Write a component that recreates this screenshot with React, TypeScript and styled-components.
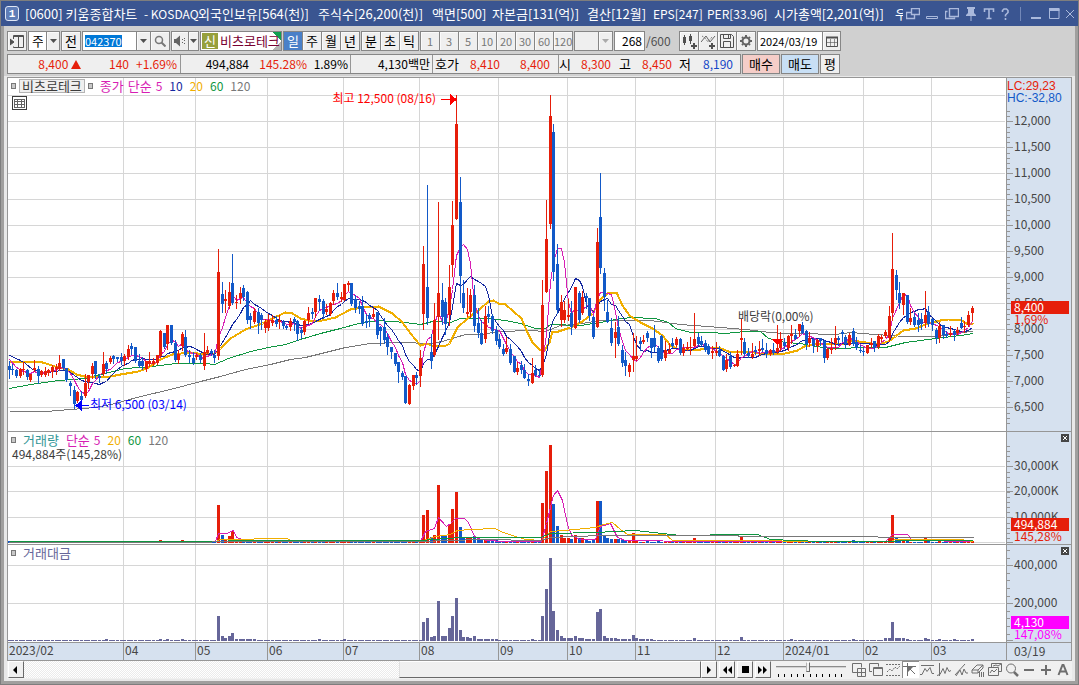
import React from "react";
import styled, { createGlobalStyle } from "styled-components";

const UI_FONT = `"Noto Sans CJK KR", sans-serif`;

const C = {
  up: "#e61e0a",
  down: "#1259c8",
  ma5: "#d71eb4",
  ma10: "#1428a0",
  ma20: "#f0ae00",
  ma60: "#0f9641",
  ma120: "#787878",
  value: "#666699",
  grid: "#d6d6d6",
  line: "#969696",
  axis: "#d6e1ef",
  axisText: "#464646",
  frame: "#868686",
  magenta: "#ff00ff",
};

const GlobalStyle = createGlobalStyle`
  * { box-sizing: border-box; }
  body { margin: 0; background: #a0a0a0; font: 13px/16px ${UI_FONT}; color: #000; }
  button, input, select { font: inherit; color: inherit; margin: 0; padding: 0; border: 0; border-radius: 0; background: none; }
`;

/* ---------- window ---------- */

const Window = styled.div`
  display: flex;
  flex-direction: column;
  height: 100vh;
  min-height: 480px;
  border: 1px solid #7e7e7e;
  background: #a09f9e;
  overflow: hidden;
`;

const TitleBar = styled.header`
  display: flex;
  align-items: center;
  flex: none;
  height: 25px;
  padding-left: 4px;
  background: #3a5591;
  color: #fff;
`;

const WindowBadge = styled.span`
  display: grid;
  place-items: center;
  flex: none;
  width: 14px;
  height: 15px;
  border: 1px solid #dfe6f5;
  border-radius: 3px;
  background: #5f7db8;
  font: bold 11px/12px "Liberation Mono", monospace;
`;

const TitleText = styled.h1`
  display: grid;
  grid-template-columns: 119px 54px 120px 114px 60px 95px 66px 54px 67px 121px 8px;
  align-items: center;
  flex: 1;
  min-width: 0;
  margin: 0 0 0 6px;
  font: inherit;
  line-height: 20px;
  white-space: pre;
  overflow: hidden;
`;

const TitlePart = styled.span<{ $latin?: boolean }>`
  font-size: ${(p) => (p.$latin ? 12 : 13)}px;
`;

const TitleTools = styled.div`
  display: flex;
  flex: none;
  width: 175px;
`;

const TitleButton = styled.button<{ $w: number }>`
  display: grid;
  place-items: center;
  width: ${(p) => p.$w}px;
  height: 20px;
  color: #aab9dc;
`;

const Body = styled.main`
  display: flex;
  flex-direction: column;
  flex: 1;
  min-height: 0;
  margin: 0 3px 3px;
  background: #e8e8e8;
`;

/* ---------- toolbars ---------- */

const Toolbars = styled.div`
  display: flex;
  flex-direction: column;
  flex: none;
  gap: 3px;
  padding: 5px 3px 2px;
  background: #d0d0d0;
`;

const ToolRow = styled.div`
  display: flex;
  gap: 1px;
  height: 20px;
  white-space: nowrap;
`;

const Group = styled.div<{ $w: number; $bg?: string }>`
  display: flex;
  flex: none;
  width: ${(p) => p.$w}px;
  border: 1px solid ${C.frame};
  background: ${(p) => p.$bg ?? "#efefef"};
`;

const Segment = styled.button<{ $active?: boolean; $muted?: boolean; $w?: number }>`
  display: grid;
  place-items: center;
  flex: ${(p) => (p.$w ? `0 0 ${p.$w}px` : "1 1 0")};
  min-width: 0;
  font-size: ${(p) => (p.$muted ? 11 : 13)}px;
  background: ${(p) => (p.$active ? "#4a80c8" : "#efefef")};
  color: ${(p) => (p.$active ? "#fff" : p.$muted ? "#787878" : "#000")};
  box-shadow: ${(p) => (p.$active ? "none" : "inset 1px 1px 0 #fafafa")};
  & + &,
  input + &,
  select + & {
    border-left: 1px solid ${C.frame};
  }
`;

const Picker = styled.select`
  flex: 1;
  min-width: 0;
  padding: 0 3px;
  appearance: none;
  background: #fff;
`;

const EmptyPicker = styled(Picker)`
  background: #efefef;
`;

const CodeInput = styled.input`
  flex: 1;
  min-width: 0;
  padding-left: 2px;
  color: #fff;
  font-size: 11px;
  background: linear-gradient(#0078d7, #0078d7) 2px 3px / 37px 12px no-repeat #fff;
`;

const TextInput = styled.input<{ $size: number; $align?: string }>`
  flex: 1;
  min-width: 0;
  padding: 0 2px;
  font-size: ${(p) => p.$size}px;
  text-align: ${(p) => p.$align ?? "left"};
  background: #fff;
`;

const StockName = styled.div`
  display: flex;
  flex: 1;
  align-items: center;
  gap: 2px;
  padding: 1px;
  color: #780032;
  background:
    linear-gradient(225deg, #0fa050 6px, transparent 6px),
    linear-gradient(315deg, #b4b4b4 6px, transparent 6px),
    #fff;
`;

const CreditBadge = styled.span`
  flex: none;
  width: 16px;
  height: 16px;
  background: #96a03c;
  color: #fff;
  line-height: 15px;
  text-align: center;
`;

const Total = styled.span`
  flex: none;
  width: 32px;
  color: #505050;
  font-size: 12px;
  line-height: 20px;
`;

const Quote = styled.div`
  display: flex;
  flex: none;
  width: 734px;
  border: 1px solid ${C.frame};
  background: #efefef;
`;

const QuoteCell = styled.div<{ $cols: string }>`
  display: grid;
  grid-template-columns: ${(p) => p.$cols};
  text-align: right;
  line-height: 18px;
  & + & {
    border-left: 1px solid ${C.line};
  }
`;

const QuoteLabel = styled.span`
  font-size: 13px;
`;

const Num = styled.span<{ $tone?: "up" | "down" }>`
  font-size: 12px;
  color: ${(p) => (p.$tone === "up" ? C.up : p.$tone === "down" ? "#1446c8" : "#000")};
`;

const OrderButton = styled.button<{ $w: number; $bg: string }>`
  flex: none;
  width: ${(p) => p.$w}px;
  border: 1px solid ${C.frame};
  background: ${(p) => p.$bg};
`;

/* ---------- chart ---------- */

const ChartFrame = styled.section`
  display: flex;
  flex: 1;
  min-height: 0;
  padding: 1px 3px 0;
`;

const ChartGrid = styled.div`
  display: grid;
  grid-template-columns: minmax(0, 1fr) 65px;
  grid-template-rows: minmax(0, 353fr) minmax(0, 113fr) minmax(0, 98fr) 19px;
  flex: 1;
  border: 1px solid ${C.line};
  border-bottom: 0;
`;

const Plot = styled.div<{ $first?: boolean }>`
  position: relative;
  border-top: ${(p) => (p.$first ? "0" : `1px solid ${C.line}`)};
  background: #fff;
  overflow: hidden;
`;

const Scale = styled(Plot)`
  border-left: 1px solid ${C.line};
  background: ${C.axis};
`;

const Canvas = styled.svg`
  position: absolute;
  inset: 0;
  width: 100%;
  height: 100%;
  font: 12px ${UI_FONT};
`;

const Legend = styled.div`
  position: relative;
  display: flex;
  align-items: center;
  gap: 7px;
  padding: 1px 3px 0;
  line-height: 14px;
`;

const Marker = styled.i`
  width: 5px;
  height: 6px;
  border: 1px solid #787878;
  background: #c8c8c8;
`;

const LegendItem = styled.span<{ $c: string }>`
  color: ${(p) => p.$c};
`;

const LegendNumber = styled(LegendItem)`
  font-size: 12px;
`;

const LegendButton = styled.button`
  height: 14px;
  margin: 0 -4px;
  padding: 0 2px;
  border: 1px solid #b4b4b4;
  background: #efefef;
  color: #3c3c3c;
  line-height: 12px;
`;

const LegendGroup = styled.span`
  display: flex;
  gap: 4px;
`;

const TableButton = styled.button`
  position: relative;
  display: block;
  margin: 3px 0 0 4px;
  line-height: 0;
`;

const Note = styled.p`
  position: relative;
  margin: 0;
  padding-left: 4px;
  color: #3c3c3c;
  font-size: 12px;
  line-height: 13px;
`;

const ClosePanel = styled.button`
  position: absolute;
  top: 2px;
  right: 2px;
  display: block;
  line-height: 0;
`;

const DateAxis = styled(Plot)`
  border-bottom: 1px solid ${C.line};
  background: ${C.axis};
`;

const DateCell = styled(DateAxis)`
  border-left: 1px solid ${C.line};
  padding-left: 7px;
  color: ${C.axisText};
  font-size: 12px;
`;

/* ---------- bottom bar ---------- */

const BottomBar = styled.footer`
  display: flex;
  flex: none;
  height: 20px;
  border: solid #e8e8e8;
  border-width: 0 3px 2px;
  padding: 0 1px;
  background: #f0f0f0;
`;

const RaisedButton = styled.button`
  display: grid;
  place-items: center;
  flex: none;
  width: 16px;
  height: 17px;
  border: 1px solid;
  border-color: #fff #696969 #696969 #fff;
  background: #f0f0f0;
`;

const Track = styled.div`
  display: flex;
  flex: 1;
  height: 17px;
  background: repeating-conic-gradient(#fff 0 25%, #ebebeb 0 50%) 0 0 / 2px 2px;
`;

const TrackThumb = styled.div`
  width: 302px;
  margin-left: auto;
  border: 1px solid;
  border-color: #fff #696969 #696969 #e0e0e0;
  background: #f0f0f0;
`;

const Playback = styled.div`
  display: flex;
  gap: 2px;
  margin-right: 5px;
`;

const ZoomBox = styled.div`
  flex: none;
  width: 70px;
`;

const ZoomSlider = styled.input`
  display: block;
  width: 100%;
  height: 12px;
  appearance: none;
  &::-webkit-slider-runnable-track {
    height: 2px;
    background: #8c8c8c;
    border-bottom: 1px solid #d2d2d2;
  }
  &::-webkit-slider-thumb {
    appearance: none;
    width: 4px;
    height: 10px;
    margin-top: -4px;
    border: 1px solid;
    border-color: #fff #696969 #696969 #b4b4b4;
    background: #f0f0f0;
  }
`;

const ZoomTicks = styled.svg`
  display: block;
  width: 100%;
  height: 4px;
`;

const DrawTools = styled.div`
  display: flex;
  flex: none;
  margin-left: 5px;
  width: 220px;
`;

const DrawButton = styled.button<{ $pressed?: boolean }>`
  display: grid;
  place-items: center;
  width: 17px;
  height: 17px;
  color: #6e6e6e;
  background: ${(p) => (p.$pressed ? "#fff" : "none")};
  box-shadow: ${(p) => (p.$pressed ? "inset 1px 1px 0 #8c8c8c" : "none")};
`;

/* ---------- data ---------- */

/* One entry per session: direction, then high, body top, body bottom, low in plot units. */
const SESSIONS = `b361 366 370 378,b364 369 370 374,b369 370 376 377,r368 369 376 377,r362 369 370 374,b369 370 377 379,r374 374 380 381,r360 368 370 371,
b366 369 376 383,r370 371 375 376,r367 371 375 376,r369 370 373 375,r365 367 372 377,r364 367 369 374,r355 363 369 370,b359 359 368 369,
b368 368 380 381,b381 383 386 395,b386 390 404 408,r391 392 401 402,b391 396 400 402,r374 383 396 397,r375 375 382 388,r363 366 374 378,
b361 361 374 378,b374 376 378 382,r352 364 374 375,b361 363 369 373,r356 358 362 363,b355 356 359 363,b357 357 359 361,b353 357 361 364,
r354 356 361 365,r345 349 357 359,b343 346 349 354,b347 347 361 362,b354 361 366 367,b357 361 366 369,r361 361 369 371,r352 361 364 366,
r358 361 364 365,r355 355 363 364,r330 331 356 357,b333 333 347 348,r325 325 344 349,b325 325 343 344,b340 343 360 361,r350 354 360 363,
r332 334 346 350,b330 337 355 356,b350 355 357 362,b352 358 363 364,r353 355 357 359,b353 355 360 362,r333 352 366 369,r346 350 353 354,
b349 351 353 355,b350 355 358 362,r249 272 356 359,b282 294 304 312,r290 299 301 312,r282 292 306 308,b254 283 303 304,r295 302 303 308,
r287 293 298 303,b285 288 297 300,b291 292 320 323,b313 316 320 328,r308 311 322 323,b308 312 323 333,b313 315 320 329,r319 322 328 332,
r314 320 328 330,r315 320 323 325,b316 320 324 326,r315 320 322 328,b320 322 326 328,b325 326 328 329,r318 321 327 330,b317 319 322 330,
b320 321 334 340,b327 330 333 338,r320 321 332 334,r307 313 320 323,b308 312 314 318,r298 298 312 317,b295 299 302 310,b299 301 314 318,
r304 309 312 314,r302 303 314 315,r290 293 301 304,b283 293 297 299,r292 297 299 301,r284 284 300 300,r281 283 285 290,b283 283 304 305,
b295 299 308 312,b301 306 309 313,b296 306 324 325,b314 321 323 327,b313 315 319 326,r308 314 317 318,b312 312 335 338,b326 327 331 345,
b318 327 340 343,b333 337 347 354,b347 347 352 358,b353 353 364 365,b362 362 372 382,b371 373 377 379,b376 376 403 403,r384 385 404 404,
r375 375 386 389,b372 375 378 384,r350 358 376 386,r246 264 314 329,b185 287 318 324,b334 352 361 368,r303 320 355 356,r202 293 317 339,
b283 300 317 324,b298 302 324 334,r265 287 315 325,r201 225 265 276,r95 124 219 219,b177 202 276 302,b280 293 308 312,r288 312 314 316,
r289 295 312 317,b285 295 326 331,b308 323 333 337,b320 333 344 344,r306 316 339 342,b306 314 317 322,b314 316 331 333,b326 330 341 344,
b334 339 347 348,b344 349 354 355,r337 348 352 353,b344 349 363 364,b356 356 372 372,r362 368 372 374,b361 365 370 373,b364 370 378 378,
b374 379 381 385,r358 373 383 383,b365 370 375 376,b369 375 376 376,r280 305 375 376,r200 239 292 292,r95 116 224 228,b124 132 272 280,
b244 264 310 313,r295 302 320 326,r301 310 320 322,r299 315 317 320,b301 313 327 334,r287 287 328 328,b291 293 320 322,r291 297 313 314,
b293 296 298 308,b298 298 316 320,b316 317 337 338,r228 242 327 327,b173 217 268 273,b268 273 297 310,b300 312 322 322,b318 328 343 345,
r322 332 338 357,b316 327 344 345,b345 350 363 366,b352 360 366 375,r363 365 372 376,r333 356 360 371,r336 356 359 360,b337 341 344 350,
r335 340 342 343,b331 333 338 341,b338 338 348 357,b325 338 347 351,b346 348 361 362,b335 336 359 360,r341 350 358 360,r343 350 353 353,
b338 343 346 347,r337 339 345 346,b338 339 353 354,r344 348 353 355,r342 347 349 350,r337 347 348 354,r313 339 346 346,b333 337 344 345,
b336 341 345 345,b340 343 350 351,b344 346 354 354,r346 351 353 358,r342 351 353 355,b346 350 356 356,b355 356 370 370,r354 360 369 371,
b352 356 367 368,r364 365 366 366,r350 354 366 366,r319 338 340 354,b338 342 354 355,b348 353 356 357,r343 354 357 358,b346 350 352 354,
r341 349 351 355,b339 348 350 351,b343 350 354 357,r349 350 354 355,b343 350 353 354,r325 348 352 353,r332 339 348 350,b338 342 346 348,
r335 336 348 350,r325 334 336 343,b329 335 339 339,r324 324 331 336,b322 325 333 333,b330 331 344 349,r332 338 343 346,b338 339 346 352,
r339 340 346 351,b338 338 341 345,b340 341 358 362,r348 349 358 359,r338 348 350 353,r326 338 343 349,b336 338 340 345,b330 332 334 341,
b335 337 344 348,r333 335 345 345,b328 331 344 345,b337 342 348 349,b345 350 351 352,b348 351 352 355,r345 345 353 353,r338 343 345 347,
b341 341 348 351,r334 336 347 348,r335 337 339 341,r330 332 336 337,r306 316 338 341,r233 269 313 320,b270 275 290 299,b282 293 303 308,
r293 293 305 314,b295 295 322 323,r308 318 322 324,b313 317 325 326,b313 320 325 331,b313 319 324 329,r291 315 323 327,b306 312 324 326,
b318 319 325 330,b328 330 338 343,r322 326 338 342,b325 325 335 338,b331 334 336 337,r326 333 335 336,b330 331 335 340,r327 330 333 334,
b317 323 328 328,r321 326 327 332,r311 315 325 326,r306 308 313 320`
  .split(",")
  .map((entry) => {
    const text = entry.trim();
    const [high, top, bottom, low] = text.slice(1).split(" ").map(Number);
    return { up: text[0] === "r", high, top, bottom, low };
  });

/* Bar heights of the sessions with notable turnover. */
const VOLUME: Record<number, number> = {
  0: 2, 6: 2, 7: 2, 25: 2, 42: 3, 48: 3, 58: 38, 59: 8, 60: 4, 61: 7, 62: 12, 63: 3, 64: 3, 65: 2, 66: 3, 67: 2, 68: 2,
  115: 28, 116: 33, 117: 6, 118: 8, 119: 58, 120: 7, 121: 7, 122: 19, 123: 34, 124: 51, 125: 16, 126: 6, 127: 5, 128: 5,
  129: 7, 130: 5, 131: 4, 132: 4, 133: 3, 134: 3, 135: 3, 148: 40, 149: 72, 150: 98, 151: 39, 152: 17, 153: 8, 154: 5,
  155: 5, 156: 4, 157: 8, 158: 5, 159: 5, 160: 3, 161: 2, 162: 3, 163: 42, 164: 42, 165: 7, 166: 5, 167: 4, 168: 4,
  169: 4, 170: 3, 171: 2, 172: 2, 173: 10, 174: 3, 177: 3, 180: 2, 190: 5, 193: 2, 203: 6, 212: 3, 217: 3, 221: 3,
  234: 3, 244: 5, 245: 28, 246: 5, 247: 4, 248: 3, 249: 3, 254: 5, 255: 3, 258: 3, 267: 2,
};

const VALUE: Record<number, number> = {
  27: 2, 42: 2, 44: 2, 48: 2, 58: 25, 59: 5, 60: 3, 61: 5, 62: 8, 63: 2, 64: 2, 65: 2, 66: 2, 67: 2, 68: 2, 86: 2, 93: 2,
  115: 19, 116: 23, 117: 4, 118: 5, 119: 40, 120: 5, 121: 5, 122: 13, 123: 25, 124: 43, 125: 11, 126: 4, 127: 4, 128: 3,
  129: 5, 130: 2, 131: 2, 132: 2, 133: 2, 134: 2, 135: 2, 145: 2, 148: 25, 149: 52, 150: 83, 151: 30, 152: 11, 153: 5,
  154: 3, 155: 3, 156: 3, 157: 5, 158: 3, 159: 3, 160: 2, 161: 2, 162: 2, 163: 29, 164: 32, 165: 5, 166: 3, 167: 3,
  168: 3, 169: 2, 170: 2, 171: 2, 172: 2, 173: 6, 174: 3, 175: 2, 176: 2, 177: 2, 178: 2, 190: 3, 203: 4, 217: 2,
  234: 2, 243: 3, 244: 3, 245: 19, 246: 3, 247: 3, 248: 3, 249: 2, 254: 3, 255: 2, 258: 2, 262: 2, 267: 2,
};

const MONTHS: [number, string][] = [
  [123, "04"], [195, "05"], [267, "06"], [343, "07"], [419, "08"], [498, "09"],
  [567, "10"], [635, "11"], [715, "12"], [783, "2024/01"], [863, "02"], [931, "03"],
];

const sessionX = (i: number) => Math.floor(9.3 + 3.606 * i);

const closeOf = (i: number) => (SESSIONS[i].up ? SESSIONS[i].top : SESSIONS[i].bottom);

const movingAverage = (span: number) =>
  SESSIONS.map((_, i) => i)
    .slice(span - 1)
    .map((i) => {
      let sum = 0;
      for (let k = 0; k < span; k++) sum += closeOf(i - k);
      return `${sessionX(i)},${Math.round(sum / span)}`;
    })
    .join(" ");

const MA5 = `9,359 16,367 ${movingAverage(5)}`;
const MA10 = `9,355 18,359 25,363 32,369 ${movingAverage(10)}`;
const MA20 =
  "9,361 30,361 42,362 58,367 68,369 76,374 84,376 110,376 120,374 138,371 148,367 160,359 172,354 190,352 205,354 214,353 220,348 230,338 245,329 262,323 274,317 285,312 292,313 300,318 312,321 322,320 335,317 350,309 362,307 378,306 392,313 402,322 410,333 420,345 426,343 434,346 446,345 449,343 457,327 467,318 480,308 488,301 493,300 498,303 505,304 513,311 521,318 526,330 532,342 539,349 544,350 549,342 552,331 558,331 570,327 582,321 592,313 600,299 608,292 616,292 622,305 629,315 640,322 652,328 662,335 670,345 678,349 690,350 700,349 708,347 718,347 728,351 740,351 754,352 765,354 785,353 797,350 804,346 820,343 832,343 840,344 852,340 865,342 878,344 888,341 895,336 903,330 915,328 928,323 940,320 948,319 960,319 966,323 973,324";
const MA60 =
  "9,388 30,384 58,380 84,378 100,374 125,368 152,366 175,363 205,363 214,364 228,358 250,351 268,347 285,344 300,339 320,333 340,328 358,323 378,320 405,322 420,324 432,321 450,322 460,318 485,318 505,320 520,323 535,328 545,328 550,324 580,325 600,322 615,319 630,317 655,318 668,322 675,328 690,332 710,332 725,333 745,331 760,331 768,338 785,342 800,343 815,346 832,348 870,347 885,347 905,342 935,338 960,335 973,333";
const MA120 =
  "9,411 45,411 70,409 95,407 115,403 140,396 170,389 200,381 220,376 245,369 270,364 290,359 305,357 325,352 345,347 370,343 400,342 430,343 442,341 455,337 465,334 480,334 500,331 530,330 545,331 560,325 575,324 600,320 620,320 650,320 680,324 720,327 745,329 770,332 785,333 800,333 835,334 850,332 875,334 905,336 935,336 960,332 973,331";

const VOL5 =
  "9,542 215,541 218,533 226,533 233,530 236,537 242,539 250,541 420,541 425,531 434,528 438,517 446,526 450,523 455,518 464,518 468,522 474,536 480,539 500,541 541,541 546,523 553,495 557,490 562,500 567,524 571,535 580,539 595,539 600,526 610,523 617,537 625,540 700,541 885,541 892,534 907,534 912,540 973,541";
const VOL20 =
  "184,541 215,541 220,539 287,538 290,540 420,541 435,536 450,534 457,530 470,529 495,528 500,531 512,535 525,539 541,540 550,531 575,529 595,527 603,524 612,522 620,529 627,534 665,534 672,540 890,541 895,539 960,539 973,541";
const VOL60 =
  "9,541 215,541 240,540 420,540 460,537 540,537 550,533 595,532 635,530 680,535 740,534 757,534 770,539 820,541 973,540";
const VOL120 = "9,542 420,541 480,539 540,540 550,537 600,535 870,536 885,537 973,537";

/* ---------- chart pieces ---------- */

type Box = { y: number; h: number };
const PRICE: Box = { y: 78, h: 353 };
const VOL: Box = { y: 432, h: 112 };
const AMT: Box = { y: 545, h: 97 };
const LEFT = 8;
const WIDTH = 998;

const px = (x: number) => `${((x - LEFT) / WIDTH) * 100}%`;
const py = (box: Box, y: number) => `${((y - box.y) / box.h) * 100}%`;

function Drawing({ box, rows, children }: { box: Box; rows: number[]; children: React.ReactNode }) {
  return (
    <svg
      width="100%"
      height="100%"
      viewBox={`${LEFT} ${box.y} ${WIDTH} ${box.h}`}
      preserveAspectRatio="none"
      shapeRendering="crispEdges"
      fill="none"
    >
      {rows.map((y) => (
        <rect key={y} x={LEFT} y={y} width={WIDTH - 1} height={1} fill={C.grid} />
      ))}
      {MONTHS.map(([x]) => (
        <rect key={x} x={x} y={box.y} width={1} height={box.h} fill={C.grid} />
      ))}
      {children}
    </svg>
  );
}

function Line({ points, color, w = 1 }: { points: string; color: string; w?: number }) {
  return <polyline points={points} stroke={color} strokeWidth={w} transform="translate(0.5 0.5)" />;
}

function Bars({ heights, base, color }: { heights: Record<number, number>; base: number; color?: string }) {
  return (
    <>
      {SESSIONS.map((s, i) => {
        const h = heights[i] ?? 1;
        const fill = color ?? (s.up || i === 62 || i === 116 ? C.up : C.down);
        return <rect key={i} x={sessionX(i) - 1} y={base - h} width={3} height={h} fill={fill} />;
      })}
    </>
  );
}

const range = (from: number, to: number, step: number) => {
  const out: number[] = [];
  for (let v = from; v <= to; v += step) out.push(v);
  return out;
};

function ScaleTicks({ box, minor, major }: { box: Box; minor: number[]; major: [number, string][] }) {
  return (
    <g>
      {minor.map((y) => (
        <rect key={y} x={0} y={py(box, Math.round(y))} width={3} height={1} fill={C.line} />
      ))}
      {major.map(([y, label]) => (
        <g key={y}>
          <rect x={0} y={py(box, y)} width={6} height={1} fill={C.line} />
          <text x={7} y={py(box, y)} dy={4} fill={C.axisText}>
            {label}
          </text>
        </g>
      ))}
    </g>
  );
}

function Tag({ box, y, fill, label, change }: { box: Box; y: number; fill: string; label: string; change: string }) {
  return (
    <g>
      <rect x={4} y={py(box, y)} width={58} height={13} fill={fill} />
      <text x={7} y={py(box, y)} dy={11} fill="#fff">
        {label}
      </text>
      <text x={7} y={py(box, y)} dy={23} fill={fill}>
        {change}
      </text>
    </g>
  );
}

function CloseIcon() {
  return (
    <svg width="8" height="8" shapeRendering="crispEdges">
      <rect width="8" height="8" fill="#464646" />
      <path d="M2 2h1v1h2v-1h1v1h-1v2h1v1h-1v-1h-2v1h-1v-1h1v-2h-1z" fill="#fff" />
    </svg>
  );
}

/* ---------- icons ---------- */

function Icon({ w = 14, h = 14, children, color = "currentColor" }: { w?: number; h?: number; children: React.ReactNode; color?: string }) {
  return (
    <svg width={w} height={h} viewBox={`0 0 ${w} ${h}`} fill="none" stroke={color} strokeWidth="1">
      {children}
    </svg>
  );
}

const ArrowDown = ({ muted }: { muted?: boolean }) => (
  <svg width="7" height="4">
    <path d="M0 0h7l-3.5 4z" fill={muted ? "#aaa" : "#505050"} />
  </svg>
);

const TITLE_ICONS: { name: string; w: number; icon: React.ReactNode }[] = [
  { name: "창 분리", w: 19, icon: <Icon w={14} h={12}><path d="M5.500 .5h8v6h-8zM5.500 4.500h-5v6h8v-4" strokeWidth="1.400" /></Icon> },
  { name: "접기", w: 20, icon: <Icon w={14} h={12}><path d="M1.500 8.500h11v2h-11z" /></Icon> },
  { name: "겹치기", w: 20, icon: <Icon w={14} h={12}><path d="M4.500 .5h9v8h-9zM2.500 3.500h-2v7h9v-1" strokeWidth="1.400" /></Icon> },
  { name: "고정", w: 18, icon: <Icon w={12} h={14}><path d="M2 0h8v2h-1v4l2 2v1h-10v-1l2-2v-4h-1zM5.500 9h1v5h-1z" fill="currentColor" stroke="none" /></Icon> },
  { name: "글꼴", w: 17, icon: <Icon w={12} h={12}><path d="M1.500 4V1h9v3M6 1v10M3.500 10.500h5" strokeWidth="1.600" /></Icon> },
  { name: "도움말", w: 16, icon: <Icon w={9} h={12}><path d="M1.500 4V2.500L3 1h2.500L7 2.500v2L4.500 7v1.500M4.500 10v2" strokeWidth="1.600" /></Icon> },
  { name: "최소화", w: 35, icon: <Icon w={24} h={14}><path d="M1.500 0v14" stroke="#7388b8" /><path d="M12 11h10" strokeWidth="2" /></Icon> },
  { name: "최대화", w: 13, icon: <Icon w={11} h={11}><path d="M.5 1v9.500h9.500v-9.500" /><path d="M0 1.500h10.500" strokeWidth="3" /></Icon> },
  { name: "닫기", w: 17, icon: <Icon w={10} h={10}><path d="M1 1l8 8M9 1l-8 8" /></Icon> },
];

const DRAW_ICONS: { name: string; icon: React.ReactNode; pressed?: boolean }[] = [
  { name: "창 추가", icon: <Icon><path d="M5 9.500h-4.500v-9h9v4" /><path d="M5.500 5.500h8v8h-8zM9.500 5.500v8M5.500 9.500h8" /></Icon> },
  { name: "창 복사", icon: <Icon><path d="M3 8.500h-2.500v-8h9v3" /><path d="M4.500 4.500h9v8h-9zM4.500 5.500h9" /></Icon> },
  { name: "격자", icon: <Icon><path d="M0 1.500h14M0 12.500h14" strokeDasharray="2 1" /><path d="M1 9l3-3 2 2 3-4 2 2 3-3" strokeDasharray="2 1" /></Icon> },
  { name: "십자선", pressed: true, icon: <Icon><path d="M0 3.500h13M4.500 0v13" /><path d="M5 4h5l-5 5z" fill="currentColor" stroke="none" /><path d="M7 6l5 5" /></Icon> },
  { name: "수평선", icon: <Icon><path d="M1 2.500h13M0 11.500h2l3-6 2 3 3-4 2 6h2" /></Icon> },
  { name: "수직선", icon: <Icon><path d="M2.500 0v13M0 12.500l3-1 3-6 2 5 2-6 2 4 2-1" /></Icon> },
  { name: "추세선", icon: <Icon><path d="M1 12l10-11M2 13l4-6 2 5 2-6 2 4h2" /></Icon> },
  { name: "지우개", icon: <Icon><path d="M1 7l5-5h6l-5 5zM1 7v3h6v-3M7 10l5-5v-3" /><path d="M8.500 9v5M10.500 9v5M12.500 9v5" /></Icon> },
  { name: "차트 겹치기", icon: <Icon><path d="M3.500 4v-3.500h10v8h-3" /><path d="M.5 4.500h10v8h-10zM2 10l2-3 2 2 3-3M5 3l3-1 2 1 3-2" /></Icon> },
  { name: "돋보기", icon: <Icon><circle cx="6" cy="5.500" r="4.500" /><path d="M9 9l4 4" strokeWidth="2.500" /></Icon> },
  { name: "축소", icon: <Icon><path d="M2 7h10" strokeWidth="2" /></Icon> },
  { name: "확대", icon: <Icon><path d="M2 7h10M7 2v10" strokeWidth="2" /></Icon> },
  { name: "자동", icon: <Icon><path d="M2.500 12L6.500 2h1L11.500 12M4 8.500h6" strokeWidth="2" /></Icon> },
];

const PLAY_ICONS: [string, string][] = [
  ["재생", "M3 1l4 4-4 4z"],
  ["뒤로", "M5 1v8L1 5zM10 1v8L6 5z"],
  ["정지", "M2 1h7v7h-7z"],
  ["앞으로", "M0 1l4 4-4 4zM5 1l4 4-4 4z"],
];

/* ---------- app ---------- */

const noop = () => undefined;

function TopToolbar() {
  return (
    <ToolRow>
      <Group $w={20}>
        <Segment aria-label="종목 목록">
          <Icon w={14} h={13} color="#505050">
            <path d="M3.500 4v-3.500h10v12h-10v-1M4 1.500h9M8.500 2v10" />
            <path d="M0 4l4 3-4 3z" fill="#505050" />
          </Icon>
        </Segment>
      </Group>
      <Group $w={32}>
        <Picker aria-label="구분" defaultValue="주"><option>주</option></Picker>
        <Segment $w={13} aria-label="구분 열기"><ArrowDown /></Segment>
      </Group>
      <Group $w={20}><Segment>전</Segment></Group>
      <Group $w={88}>
        <CodeInput aria-label="종목코드" value="042370" onChange={noop} />
        <Segment $w={14} aria-label="최근 종목"><ArrowDown /></Segment>
        <Segment $w={19} aria-label="종목 검색">
          <Icon w={12} h={12} color="#787878"><circle cx="5" cy="5" r="3.500" strokeWidth="1.500" /><path d="M7.500 7.500l4 4" strokeWidth="2" /></Icon>
        </Segment>
      </Group>
      <Group $w={28}>
        <Segment aria-label="소리">
          <Icon w={12} h={12} color="#646464">
            <path d="M0 4h2l4-3.500v11l-4-3.500h-2z" fill="#646464" stroke="none" />
            <path d="M8 4.500h1M8 7.500h1M10 3.500h1M10 5.500h1M10 8.500h1" />
          </Icon>
        </Segment>
        <Segment $w={10} aria-label="소리 설정"><ArrowDown /></Segment>
      </Group>
      <Group $w={82} $bg="#fff">
        <StockName><CreditBadge>신</CreditBadge>비츠로테크</StockName>
      </Group>
      <Group $w={77}>
        {["일", "주", "월", "년"].map((t, i) => <Segment key={t} $active={i === 0}>{t}</Segment>)}
      </Group>
      <Group $w={58}>{["분", "초", "틱"].map((t) => <Segment key={t}>{t}</Segment>)}</Group>
      <Group $w={153}>
        {["1", "3", "5", "10", "20", "30", "60", "120"].map((t) => <Segment key={t} $muted>{t}</Segment>)}
      </Group>
      <Group $w={39}>
        <EmptyPicker aria-label="주기"><option /></EmptyPicker>
        <Segment $w={14} aria-label="주기 열기"><ArrowDown muted /></Segment>
      </Group>
      <Group $w={31}><TextInput aria-label="표시 개수" $size={12} $align="right" value="268" onChange={noop} /></Group>
      <Total>/600</Total>
      <Group $w={77}>
        <Segment aria-label="봉 추가">
          <Icon w={15} h={15} color="#505050">
            <path d="M2.500 1v10M8.500 0v10" /><path d="M1 3h3v6h-3zM7 2h3v5h-3z" fill="#505050" stroke="none" />
            <path d="M9 12h6M12 9v6" strokeWidth="2" />
          </Icon>
        </Segment>
        <Segment aria-label="지표 추가">
          <Icon w={15} h={15} color="#646464">
            <path d="M0 8l5-6 4 6 5-6" /><path d="M1 2l3 2 3 4 4-5" strokeDasharray="1 1" /><path d="M8 12h6M11 9v6" stroke="#505050" strokeWidth="2" />
          </Icon>
        </Segment>
        <Segment aria-label="저장">
          <Icon w={14} h={14} color="#505050"><path d="M.5 .5h11l2 2v11h-13zM3.500 .5v4h7v-4M3.500 13.500v-6h7v6M8.500 1v3" /></Icon>
        </Segment>
        <Segment aria-label="설정">
          <Icon w={14} h={14} color="#646464">
            <circle cx="7" cy="7" r="3.500" strokeWidth="2" />
            <path d="M7 1v2M7 11v2M1 7h2M11 7h2M3 3l1 1M10 10l1 1M11 3l-1 1M4 10l-1 1" strokeWidth="2" />
          </Icon>
        </Segment>
      </Group>
      <Group $w={84}>
        <TextInput aria-label="기준일" $size={11} value="2024/03/19" onChange={noop} />
        <Segment $w={18} aria-label="달력">
          <Icon w={12} h={12} color="#505050"><path d="M.5 2.500h11v9h-11z" /><path d="M4.500 4v7M8.500 4v7M1 7.500h10" strokeWidth=".6" /><path d="M0 2.500h12" strokeWidth="2" /></Icon>
        </Segment>
      </Group>
    </ToolRow>
  );
}

function QuoteRow() {
  return (
    <ToolRow>
      <Quote>
        <QuoteCell $cols="73px 48px 48px 3px">
          <Num $tone="up">8,400 <svg width="10" height="9"><path d="M5 0l5 9h-10z" fill={C.up} /></svg></Num>
          <Num $tone="up">140</Num>
          <Num $tone="up">+1.69%</Num>
        </QuoteCell>
        <QuoteCell $cols="68px 58px 41px 2px">
          <Num>494,884</Num><Num $tone="up">145.28%</Num><Num>1.89%</Num>
        </QuoteCell>
        <QuoteCell $cols="79px 2px"><Num>4,130백만</Num></QuoteCell>
        <QuoteCell $cols="26px 41px 50px 8px">
          <QuoteLabel>호가</QuoteLabel><Num $tone="up">8,410</Num><Num $tone="up">8,400</Num>
        </QuoteCell>
        <QuoteCell $cols="12px 40px 20px 41px 19px 42px">
          <QuoteLabel>시</QuoteLabel><Num $tone="up">8,300</Num>
          <QuoteLabel>고</QuoteLabel><Num $tone="up">8,450</Num>
          <QuoteLabel>저</QuoteLabel><Num $tone="down">8,190</Num>
        </QuoteCell>
      </Quote>
      <OrderButton $w={38} $bg="#f5cdc8">매수</OrderButton>
      <OrderButton $w={38} $bg="#c8dff5">매도</OrderButton>
      <OrderButton $w={20} $bg="#efefef">평</OrderButton>
    </ToolRow>
  );
}

function PricePanel() {
  const rows = range(95, 407, 26);
  return (
    <>
      <Plot $first>
        <Canvas>
          <Drawing box={PRICE} rows={rows}>
            <Line points={MA120} color={C.ma120} />
            <Line points={MA60} color={C.ma60} />
            <Line points={MA20} color={C.ma20} w={2} />
            <Line points={MA10} color={C.ma10} />
            <Line points={MA5} color={C.ma5} />
            {SESSIONS.map((s, i) => {
              const x = sessionX(i);
              return (
                <g key={i} fill={s.up ? C.up : C.down}>
                  <rect x={x} y={s.high} width={1} height={s.low - s.high + 1} />
                  <rect x={x - 1} y={s.top} width={3} height={Math.max(1, s.bottom - s.top)} />
                </g>
              );
            })}
            <path d="M441 99h9v-5l7 5.500-7 5.500v-5h-9z" fill="#f00" />
            <path d="M89 405h-7v-5l-7 5.500 7 5.500v-5h7z" fill="#00f" />
            <path d="M772 339h11l-5.500 6z" fill="#f00" />
          </Drawing>
          <text x={px(436)} y={py(PRICE, 103)} fill="#f00" textAnchor="end">최고 12,500 (08/16)</text>
          <text x={px(90)} y={py(PRICE, 409)} fill="#00f">최저 6,500 (03/14)</text>
          <text x={px(738)} y={py(PRICE, 321)} fill="#3c3c3c">배당락(0,00%)</text>
        </Canvas>
        <Legend>
          <Marker />
          <LegendButton>비츠로테크</LegendButton>
          <Marker />
          <LegendGroup>
            <LegendItem $c={C.ma5}>종가</LegendItem>
            <LegendItem $c={C.ma5}>단순</LegendItem>
            <LegendNumber $c={C.ma5}>5</LegendNumber>
          </LegendGroup>
          <LegendNumber $c={C.ma10}>10</LegendNumber>
          <LegendNumber $c={C.ma20}>20</LegendNumber>
          <LegendNumber $c={C.ma60}>60</LegendNumber>
          <LegendNumber $c={C.ma120}>120</LegendNumber>
        </Legend>
        <TableButton aria-label="데이터 표">
          <svg width="15" height="14" shapeRendering="crispEdges" fill="none" stroke="#3c3c3c">
            <rect x=".5" y=".5" width="14" height="13" fill="#fff" />
            <path d="M2.500 3.500h10v8h-10zM2.500 5.500h10M2.500 8.500h10M5.500 3v9M9.500 3v9" stroke="#646464" />
          </svg>
        </TableButton>
      </Plot>
      <Scale $first>
        <Canvas shapeRendering="crispEdges">
          <ScaleTicks
            box={PRICE}
            minor={range(111, 428, 5.2)}
            major={rows.slice(1).map((y, i) => [y, (12000 - i * 500).toLocaleString("en-US")])}
          />
          <text x={0} y={12} fill={C.up} fontFamily="Liberation Sans" fontSize={12}>LC:29,23</text>
          <text x={0} y={24} fill={C.down} fontFamily="Liberation Sans" fontSize={12}>HC:-32,80</text>
          <Tag box={PRICE} y={301} fill={C.up} label="8,400" change="1,69%" />
        </Canvas>
      </Scale>
    </>
  );
}

function VolumePanel() {
  return (
    <>
      <Plot>
        <Canvas>
          <Drawing box={VOL} rows={[466, 491, 517, 542]}>
            <Bars heights={VOLUME} base={543} />
            <Line points={VOL5} color={C.ma5} />
            <Line points={VOL20} color={C.ma20} />
            <Line points={VOL60} color={C.ma60} />
            <Line points={VOL120} color={C.ma120} />
          </Drawing>
        </Canvas>
        <Legend>
          <Marker />
          <LegendItem $c="#329696">거래량</LegendItem>
          <LegendGroup>
            <LegendItem $c={C.ma5}>단순</LegendItem>
            <LegendNumber $c={C.ma5}>5</LegendNumber>
          </LegendGroup>
          <LegendNumber $c={C.ma20}>20</LegendNumber>
          <LegendNumber $c={C.ma60}>60</LegendNumber>
          <LegendNumber $c={C.ma120}>120</LegendNumber>
        </Legend>
        <Note>494,884주(145,28%)</Note>
      </Plot>
      <Scale>
        <Canvas shapeRendering="crispEdges">
          <ScaleTicks box={VOL} minor={range(446, 542, 5.1)} major={[[466, "30,000K"], [491, "20,000K"], [517, "10,000K"], [542, ""]]} />
          <Tag box={VOL} y={518} fill={C.up} label="494,884" change="145,28%" />
        </Canvas>
        <ClosePanel aria-label="거래량 닫기"><CloseIcon /></ClosePanel>
      </Scale>
    </>
  );
}

function ValuePanel() {
  return (
    <>
      <Plot>
        <Canvas>
          <Drawing box={AMT} rows={[565, 603]}>
            <Bars heights={VALUE} base={641} color={C.value} />
          </Drawing>
        </Canvas>
        <Legend>
          <Marker />
          <LegendItem $c={C.value}>거래대금</LegendItem>
        </Legend>
      </Plot>
      <Scale>
        <Canvas shapeRendering="crispEdges">
          <ScaleTicks box={AMT} minor={range(550, 641, 7.6)} major={[[565, "400,000"], [603, "200,000"], [640, ""]]} />
          <Tag box={AMT} y={616} fill={C.magenta} label="4,130" change="147,08%" />
        </Canvas>
        <ClosePanel aria-label="거래대금 닫기"><CloseIcon /></ClosePanel>
      </Scale>
    </>
  );
}

function DateRow() {
  return (
    <>
      <DateAxis>
        <Canvas shapeRendering="crispEdges">
          <text x={1} y={12} fill={C.axisText}>2023/02</text>
          {MONTHS.map(([x, label]) => (
            <g key={x}>
              <rect x={px(x)} y={0} width={1} height="100%" fill={C.line} />
              <text x={px(x + 2)} y={12} fill={C.axisText}>{label}</text>
            </g>
          ))}
        </Canvas>
      </DateAxis>
      <DateCell>03/19</DateCell>
    </>
  );
}

const TITLE_PARTS = [
  "[0600] 키움종합차트", "- KOSDAQ", "외국인보유[564(천)]", "주식수[26,200(천)]", "액면[500]", "자본금[131(억)]",
  "결산[12월]", "EPS[247]", "PER[33.96]", "시가총액[2,201(억)]", "우",
];

export default function App() {
  return (
    <Window>
      <GlobalStyle />
      <TitleBar>
        <WindowBadge>1</WindowBadge>
        <TitleText>
          {TITLE_PARTS.map((t) => (
            <TitlePart key={t} $latin={/^(-|EPS|PER)/.test(t)}>{t}</TitlePart>
          ))}
        </TitleText>
        <TitleTools>
          {TITLE_ICONS.map((t) => (
            <TitleButton key={t.name} $w={t.w} aria-label={t.name}>{t.icon}</TitleButton>
          ))}
        </TitleTools>
      </TitleBar>
      <Body>
        <Toolbars>
          <TopToolbar />
          <QuoteRow />
        </Toolbars>
        <ChartFrame>
          <ChartGrid>
            <PricePanel />
            <VolumePanel />
            <ValuePanel />
            <DateRow />
          </ChartGrid>
        </ChartFrame>
        <BottomBar>
          <RaisedButton aria-label="왼쪽으로"><svg width="10" height="10"><path d="M6 1v8L2 5z" /></svg></RaisedButton>
          <Track><TrackThumb /></Track>
          <Playback>
            {PLAY_ICONS.map(([name, d]) => (
              <RaisedButton key={name} aria-label={name}><svg width="10" height="10"><path d={d} /></svg></RaisedButton>
            ))}
          </Playback>
          <ZoomBox>
            <ZoomSlider type="range" aria-label="확대 비율" min={0} max={100} defaultValue={46} />
            <ZoomTicks shapeRendering="crispEdges">
              {range(0, 10, 1).map((i) => (
                <rect key={i} x={`${3 + i * 9}%`} y={1} width={1} height={3} fill="#000" />
              ))}
            </ZoomTicks>
          </ZoomBox>
          <DrawTools>
            {DRAW_ICONS.map((t) => (
              <DrawButton key={t.name} $pressed={t.pressed} aria-label={t.name}>{t.icon}</DrawButton>
            ))}
          </DrawTools>
        </BottomBar>
      </Body>
    </Window>
  );
}
